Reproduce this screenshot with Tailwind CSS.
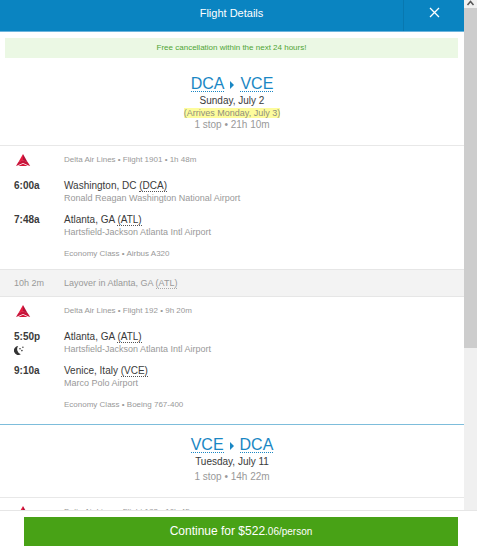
<!DOCTYPE html>
<html lang="en">
<head>
  <meta charset="UTF-8">
  <meta name="viewport" content="width=device-width, initial-scale=1.0">
  <title>Flight Details</title>
  <script src="https://cdn.jsdelivr.net/npm/@tailwindcss/browser@4"></script>
</head>
<body class="flex h-screen flex-col overflow-hidden bg-white font-['Liberation_Sans',Arial,sans-serif] text-[10px] leading-3 text-[#3a3a3a]">

  <!-- Shared icons -->
  <svg class="hidden">
    <symbol id="delta" viewBox="0 0 15 12">
      <path d="M7 0 L7 6.2 L2.2 8.4 Z" fill="#e8193c"/>
      <path d="M7 0 L7 6.2 L11.8 8.4 Z" fill="#b3123a"/>
      <path d="M2.2 8.2 L7 6 L11.8 8.2 L14.2 12 L12.6 11.4 L7 8.9 L1.4 11.4 L0 12 Z" fill="#c8143a"/>
      <path d="M2.2 12 L7 9.8 L11.8 12 Z" fill="#d8163a"/>
    </symbol>
  </svg>

  <div class="flex min-h-0 flex-1">
    <div class="flex min-w-0 flex-1 flex-col">

      <!-- Header -->
      <header class="flex h-8 shrink-0 border-b border-[#6cb4dc] bg-[#0a84c1] text-white">
        <h1 class="flex-1 pt-1.5 pl-[60px] text-center text-[11px] leading-[14px]">Flight Details</h1>
        <button type="button" aria-label="Close" class="flex w-[61px] justify-center border-l border-[#0878b0] pt-[7px]">
          <svg class="h-[11px] w-[11px]" viewBox="0 0 11 11" fill="none" stroke="currentColor" stroke-width="1.3"><path d="M1 1 L10 10 M10 1 L1 10"/></svg>
        </button>
      </header>

      <main class="min-h-0 flex-1 overflow-y-auto [scrollbar-width:none]">
        <p class="mt-1.5 mr-1.5 ml-[5px] bg-[#ebf8e4] py-1 text-center text-[8px] text-[#4fa534]">Free cancellation within the next 24 hours!</p>

        <!-- Outbound -->
        <section class="pt-[19px] pb-3.5 text-center">
          <h2 class="flex items-center justify-center gap-1.5 text-[16px] leading-[14px] text-[#1a87c4]">
            <a href="#" class="border-b border-dotted border-[#1a87c4]">DCA</a>
            <svg class="h-2 w-1" viewBox="0 0 4 8" fill="currentColor"><path d="M0 0 L4 4 L0 8 Z"/></svg>
            <a href="#" class="border-b border-dotted border-[#1a87c4]">VCE</a>
          </h2>
          <p class="mt-[3px]">Sunday, July 2</p>
          <p class="text-[9px] text-[#8f8f7c]"><span class="bg-[#fdfc9c]">(Arrives Monday, July 3)</span></p>
          <p class="text-[#999]">1 stop • 21h 10m</p>
        </section>

        <section class="grid grid-cols-[50px_1fr] border-t border-[#e8e8e8] px-3.5 pt-2 pb-[9px]">
          <svg class="ml-0.5 h-3 w-[15px]"><use href="#delta"/></svg>
          <p class="text-[8px] text-[#999]">Delta Air Lines • Flight 1901 • 1h 48m</p>
          <time class="mt-3.5 font-bold">6:00a</time>
          <div class="mt-3.5">
            <p>Washington, DC <abbr class="border-b border-dotted border-[#555] leading-none no-underline">(DCA)</abbr></p>
            <p class="text-[9px] text-[#999]">Ronald Reagan Washington National Airport</p>
          </div>
          <time class="mt-2.5 font-bold">7:48a</time>
          <div class="mt-2.5">
            <p>Atlanta, GA <abbr class="border-b border-dotted border-[#555] leading-none no-underline">(ATL)</abbr></p>
            <p class="text-[9px] text-[#999]">Hartsfield-Jackson Atlanta Intl Airport</p>
          </div>
          <p class="col-start-2 mt-2.5 text-[8px] text-[#999]">Economy Class • Airbus A320</p>
        </section>

        <!-- Layover -->
        <section class="grid grid-cols-[50px_1fr] border-y border-[#e6e6e6] bg-[#f3f3f3] px-3.5 py-[7px] text-[9px] text-[#999]">
          <p>10h 2m</p>
          <p>Layover in Atlanta, GA <abbr class="border-b border-dotted border-[#aaa] leading-none no-underline">(ATL)</abbr></p>
        </section>

        <section class="grid grid-cols-[50px_1fr] border-b border-[#7dbddb] px-3.5 pt-2 pb-[13px]">
          <svg class="ml-0.5 h-3 w-[15px]"><use href="#delta"/></svg>
          <p class="text-[8px] text-[#999]">Delta Air Lines • Flight 192 • 9h 20m</p>
          <div class="mt-3.5">
            <time class="block font-bold">5:50p</time>
            <svg class="mt-[3px] h-[9px] w-2.5" viewBox="0 0 10 9" fill="#333" role="img" aria-label="Overnight flight">
              <path d="M4.2 0 A4.5 4.5 0 1 0 6.8 8.3 A5.4 5.4 0 0 1 4.2 0 Z"/>
              <circle cx="6" cy="2.7" r="0.8"/><circle cx="8.9" cy="1.3" r="0.7"/><circle cx="7.9" cy="4.6" r="0.8"/>
            </svg>
          </div>
          <div class="mt-3.5">
            <p>Atlanta, GA <abbr class="border-b border-dotted border-[#555] leading-none no-underline">(ATL)</abbr></p>
            <p class="text-[9px] text-[#999]">Hartsfield-Jackson Atlanta Intl Airport</p>
          </div>
          <time class="mt-2.5 font-bold">9:10a</time>
          <div class="mt-2.5">
            <p>Venice, Italy <abbr class="border-b border-dotted border-[#555] leading-none no-underline">(VCE)</abbr></p>
            <p class="text-[9px] text-[#999]">Marco Polo Airport</p>
          </div>
          <p class="col-start-2 mt-2.5 text-[8px] text-[#999]">Economy Class • Boeing 767-400</p>
        </section>

        <!-- Return -->
        <section class="pt-[13px] pb-3.5 text-center">
          <h2 class="flex items-center justify-center gap-1.5 text-[16px] leading-[14px] text-[#1a87c4]">
            <a href="#" class="border-b border-dotted border-[#1a87c4]">VCE</a>
            <svg class="h-2 w-1" viewBox="0 0 4 8" fill="currentColor"><path d="M0 0 L4 4 L0 8 Z"/></svg>
            <a href="#" class="border-b border-dotted border-[#1a87c4]">DCA</a>
          </h2>
          <p class="mt-[3px]">Tuesday, July 11</p>
          <p class="mt-[3px] text-[#999]">1 stop • 14h 22m</p>
        </section>

        <section class="grid grid-cols-[50px_1fr] border-t border-[#e8e8e8] px-3.5 pt-2 pb-[9px]">
          <svg class="ml-0.5 h-3 w-[15px]"><use href="#delta"/></svg>
          <p class="text-[8px] text-[#999]">Delta Air Lines • Flight 183 • 10h 45m</p>
        </section>
      </main>
    </div>

    <!-- Scrollbar -->
    <aside class="flex w-[13px] flex-col bg-[#f0f0f0]" aria-hidden="true">
      <svg class="h-2 w-[13px] shrink-0" viewBox="0 0 13 8" fill="none" stroke="#555" stroke-width="1.5"><path d="M3.5 5 L6.5 1.5 L9.5 5"/></svg>
      <div class="h-2/3 bg-[#cdcdcd]"></div>
    </aside>
  </div>

  <!-- Footer -->
  <footer class="shrink-0 border-t border-[#e6e6e6] pt-1.5 pr-[19px] pb-1 pl-6">
    <button type="button" class="block w-full bg-[#48a216] py-1.5 text-[12px] leading-4 text-white">Continue for $522<span class="text-[10px]">.06/person</span></button>
  </footer>
</body>
</html>
